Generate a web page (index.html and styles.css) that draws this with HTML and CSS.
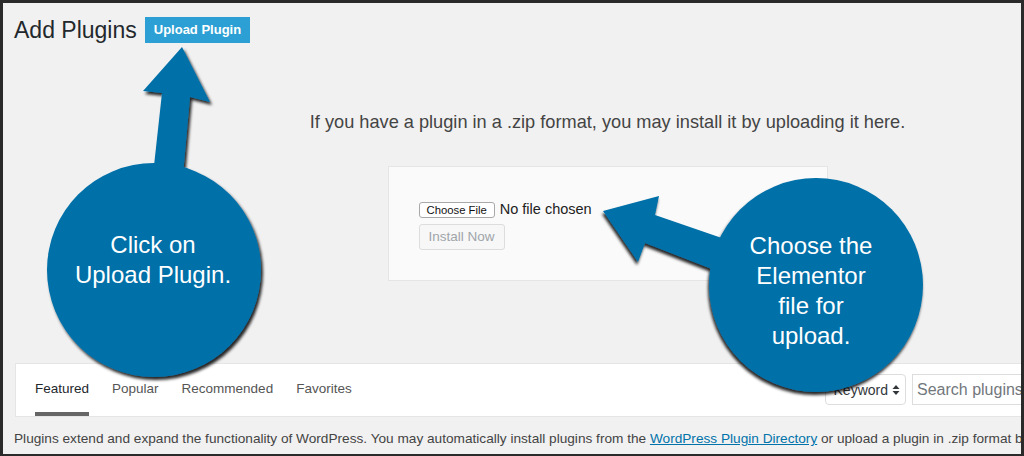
FILE: index.html
```html
<!DOCTYPE html>
<html lang="en">
<head>
<meta charset="utf-8">
<title>Add Plugins</title>
<link rel="stylesheet" href="styles.css">
</head>
<body>
<div class="frame">
  <div class="header">
    <h1 class="title">Add Plugins</h1>
    <span class="upload-btn">Upload Plugin</span>
  </div>
  <div class="upload-area">
    <p class="message">If you have a plugin in a .zip format, you may install it by uploading it here.</p>
    <div class="upload-box">
      <div class="file-row">
        <span class="choose-btn">Choose File</span>
        <span class="no-file">No file chosen</span>
      </div>
      <span class="install-btn">Install Now</span>
    </div>
  </div>
  <div class="tabs-bar">
    <ul class="tabs">
      <li class="tab current">Featured</li>
      <li class="tab">Popular</li>
      <li class="tab">Recommended</li>
      <li class="tab">Favorites</li>
    </ul>
    <div class="search-form">
      <span class="select">Keyword
        <svg class="select-arrows" width="8" height="12" viewBox="0 0 8 12"><path d="M4 1 L7.5 5 L0.5 5 Z M4 11 L7.5 7 L0.5 7 Z" fill="#32373c"/></svg>
      </span>
      <span class="search-input">Search plugins</span>
    </div>
  </div>
  <p class="intro">Plugins extend and expand the functionality of WordPress. You may automatically install plugins from the <a class="link" href="#">WordPress Plugin Directory</a> or upload a plugin in .zip format by clicking the button at the top of this page.</p>
</div>

<svg class="annotations" width="1024" height="456" viewBox="0 0 1024 456">
  <defs>
    <filter id="shL" x="-20%" y="-20%" width="140%" height="140%">
      <feDropShadow dx="2" dy="3" stdDeviation="1.6" flood-color="#000" flood-opacity="0.85"/>
    </filter>
    <filter id="shR" x="-20%" y="-20%" width="140%" height="140%">
      <feDropShadow dx="-1" dy="3" stdDeviation="1.6" flood-color="#000" flood-opacity="0.85"/>
    </filter>
  </defs>
  <g filter="url(#shL)" fill="#0070a8">
    <polygon points="182,47 210,102 190,97 183,175 153,175 162,93 143,91"/>
    <circle cx="154" cy="270" r="107"/>
  </g>
  <g filter="url(#shR)" fill="#0070a8">
    <polygon points="603,211 659,196 655,215 745,246 740,280 645,243 638,262"/>
    <circle cx="816" cy="285" r="107"/>
  </g>
  <g class="callout-text" fill="#fff" text-anchor="middle">
    <text x="153" y="253">Click on</text>
    <text x="153" y="283">Upload Plugin.</text>
    <text x="811" y="254">Choose the</text>
    <text x="811" y="284">Elementor</text>
    <text x="811" y="314">file for</text>
    <text x="811" y="344">upload.</text>
  </g>
</svg>
</body>
</html>
```

FILE: styles.css
```css
html, body {
  margin: 0;
  padding: 0;
}
body {
  position: relative;
  width: 1024px;
  height: 456px;
  overflow: hidden;
  font-family: "Liberation Sans", Arial, sans-serif;
}
.frame {
  box-sizing: border-box;
  width: 1024px;
  height: 456px;
  background: #f1f1f1;
  border-style: solid;
  border-color: #2a2a2a;
  border-width: 3px 3px 2px 3px;
  overflow: hidden;
}
.header {
  display: flex;
  align-items: center;
  gap: 8px;
  padding: 14px 0 0 11px;
  height: 26px;
}
.title {
  margin: 0;
  font-size: 23px;
  font-weight: 400;
  line-height: 26px;
  color: #23282d;
}
.upload-btn {
  display: inline-block;
  height: 26px;
  line-height: 26px;
  padding: 0 9px;
  background: #2ca0d4;
  color: #fff;
  font-weight: 700;
  font-size: 13px;
}
.upload-area {
  margin-left: 191px;
  text-align: center;
}
.message {
  margin: 68px 0 33px;
  font-size: 18.2px;
  line-height: 22px;
  color: #444;
}
.upload-box {
  box-sizing: border-box;
  width: 440px;
  height: 115px;
  margin: 0 auto;
  padding: 35px 30px 0;
  background: #fafafa;
  border: 1px solid #e5e5e5;
  text-align: left;
  display: flex;
  flex-direction: column;
  align-items: flex-start;
  gap: 6px;
}
.file-row {
  display: flex;
  align-items: center;
  height: 16px;
}
.choose-btn {
  box-sizing: border-box;
  height: 16px;
  line-height: 14px;
  padding: 0 7px;
  background: #fff;
  border: 1px solid #a9a9a9;
  border-radius: 3px;
  font-size: 11.3px;
  color: #111;
}
.no-file {
  margin-left: 5px;
  font-size: 14.5px;
  color: #222;
  position: relative;
  top: -1px;
}
.install-btn {
  box-sizing: border-box;
  height: 26px;
  line-height: 24px;
  padding: 0 9px;
  border: 1px solid #ddd;
  border-radius: 3px;
  background: #f7f7f7;
  color: #a0a5aa;
  font-size: 13.5px;
}
.tabs-bar {
  box-sizing: border-box;
  width: 1040px;
  height: 54px;
  margin: 82px 0 0 12px;
  background: #fff;
  border: 1px solid #e5e5e5;
  display: flex;
  align-items: flex-start;
}
.tabs {
  display: flex;
  gap: 23px;
  margin: 0 0 0 19px;
  padding: 0;
  list-style: none;
}
.tab {
  box-sizing: border-box;
  height: 52px;
  padding-top: 16px;
  line-height: 18px;
  font-size: 13.5px;
  color: #555;
  border-bottom: 4px solid transparent;
}
.tab.current {
  color: #23282d;
  border-bottom-color: #666;
}
.search-form {
  margin-left: auto;
  margin-right: 12px;
  margin-top: 10px;
  display: flex;
  gap: 6px;
}
.select {
  box-sizing: border-box;
  width: 81px;
  height: 31px;
  border: 1px solid #ddd;
  border-radius: 4px;
  display: flex;
  align-items: center;
  justify-content: flex-end;
  gap: 4px;
  padding-right: 5px;
  font-size: 14px;
  color: #32373c;
}
.search-input {
  box-sizing: border-box;
  width: 130px;
  height: 31px;
  line-height: 29px;
  padding-left: 4px;
  border: 1px solid #ddd;
  font-size: 16px;
  color: #72777c;
  background: #fff;
}
.intro {
  margin: 13px 0 0 11px;
  width: 1100px;
  font-size: 13.65px;
  line-height: 18px;
  color: #444;
  white-space: nowrap;
}
.link {
  color: #0073aa;
}
.annotations {
  position: absolute;
  left: 0;
  top: 0;
}
.callout-text {
  font-family: "Liberation Sans", Arial, sans-serif;
  font-size: 24px;
}
```
